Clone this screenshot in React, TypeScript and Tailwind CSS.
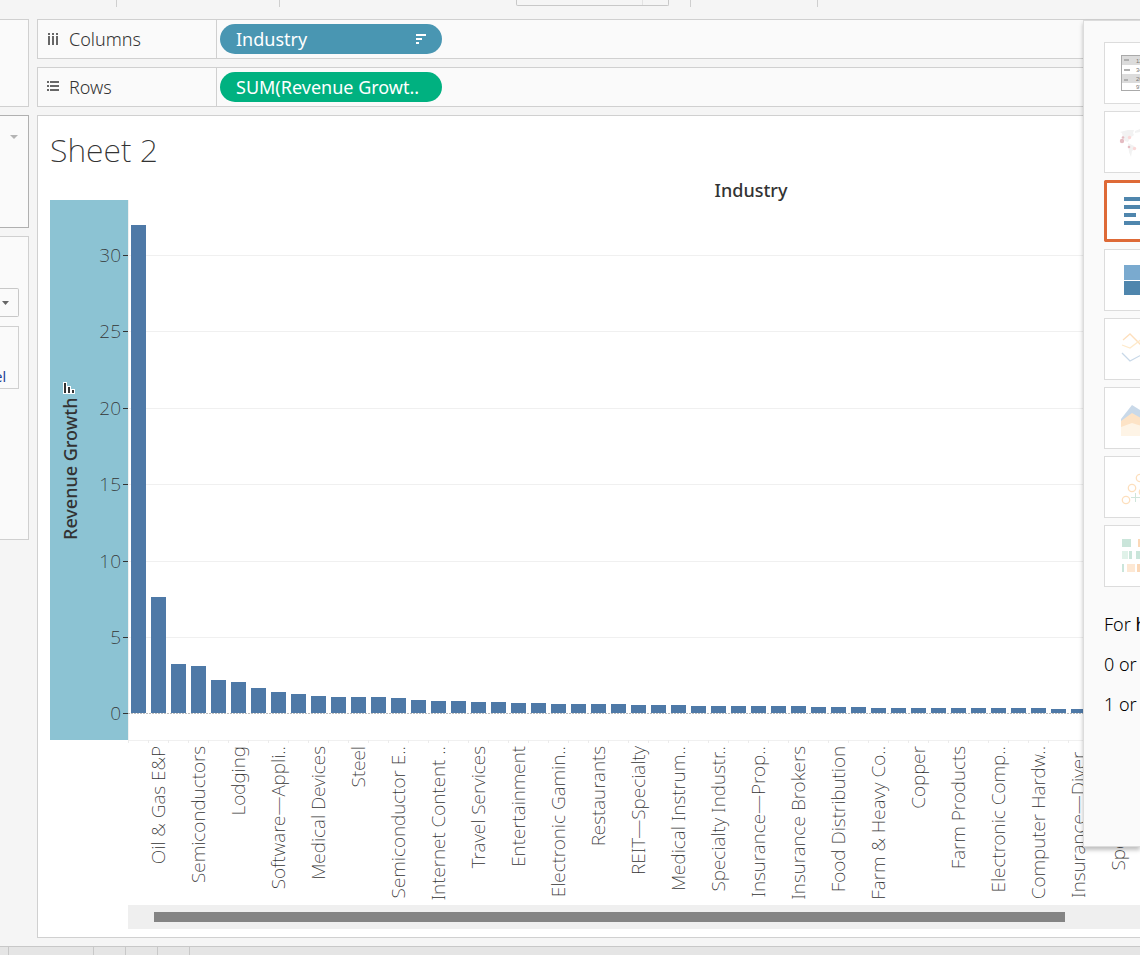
import type { ReactNode } from 'react';

const PLOT_HEIGHT = 540;
const BASELINE = 513;
const STEP = 20;
const UNIT = 15.27;

// === REVENUE GROWTH PER INDUSTRY (SORTED) ===
const growth: number[] = [
  31.96, 7.6, 3.2, 3.1, 2.15, 2.05, 1.65, 1.4, 1.25, 1.1, 1.05, 1.05, 1.05, 1.0,
  0.85, 0.8, 0.8, 0.7, 0.7, 0.65, 0.65, 0.6, 0.6, 0.6, 0.6, 0.52, 0.52, 0.52,
  0.45, 0.45, 0.45, 0.45, 0.45, 0.45, 0.4, 0.4, 0.4, 0.33, 0.33, 0.33, 0.33,
  0.33, 0.33, 0.33, 0.33, 0.33, 0.27, 0.27, 0.27, 0.27, 0.27, 0.27,
];

// every second industry gets a label
const industries: string[] = [
  'Oil & Gas E&P', 'Semiconductors', 'Lodging', 'Software—Appli..', 'Medical Devices',
  'Steel', 'Semiconductor E..', 'Internet Content ..', 'Travel Services',
  'Entertainment', 'Electronic Gamin..', 'Restaurants', 'REIT—Specialty',
  'Medical Instrum..', 'Specialty Industr..', 'Insurance—Prop..',
  'Insurance Brokers', 'Food Distribution', 'Farm & Heavy Co..', 'Copper',
  'Farm Products', 'Electronic Comp..', 'Computer Hardw..', 'Insurance—Diver..',
  'Specialty Retail',
];

const ticks = [
  { label: '30', y: 55 },
  { label: '25', y: 131 },
  { label: '20', y: 208 },
  { label: '15', y: 284 },
  { label: '10', y: 361 },
  { label: '5', y: 437 },
  { label: '0', y: 513 },
];

export default function App() {
  return (
    <div className="relative flex min-h-screen flex-col overflow-hidden bg-[#f5f5f5] font-['Noto_Sans',sans-serif] text-[#333]">
      <Toolbar />
      <div className="flex flex-1 gap-2">
        <SidePanel />
        <main className="flex min-w-0 flex-1 flex-col gap-2">
          <Shelf label="Columns" icon={<ColumnsIcon />}>
            <Pill name="Industry" color="bg-[#4996b2]" sorted />
          </Shelf>
          <Shelf label="Rows" icon={<RowsIcon />}>
            <Pill name="SUM(Revenue Growt.." color="bg-[#00b180]" />
          </Shelf>
          <Sheet />
        </main>
      </div>
      <StatusBar />
      <ShowMe />
    </div>
  );
}

const Toolbar = () => (
  <header className="flex h-[19px] shrink-0 items-start">
    <span className="h-[7px] w-[117px] border-r border-[#cfcfcf]" />
    <span className="h-[7px] w-[163px] border-r border-[#cfcfcf]" />
    <div className="ml-[236px] flex h-1.5 w-[153px] rounded-b-xs border border-t-0 border-[#c8c8c8]">
      <select aria-label="Fit" className="h-full min-w-0 flex-1 appearance-none bg-transparent" />
      <span className="w-[26px] border-l border-[#e3e3e3]" />
    </div>
    <span className="h-[7px] w-[22px] border-r border-[#cfcfcf]" />
    <span className="h-[7px] w-[127px] border-r border-[#cfcfcf]" />
  </header>
);

const SidePanel = () => (
  <aside className="flex w-[29px] shrink-0 flex-col gap-2">
    <section className="h-[88px] border border-l-0 border-[#d0d0d0] bg-[#fafafa]" />
    <section className="flex h-[113px] justify-end border border-l-0 border-[#b0b0b0] bg-[#fafafa] pt-[19px] pr-2.5">
      <svg width="8" height="4" viewBox="0 0 8 4" fill="#b4b4b4">
        <path d="M0 0h8L4 4z" />
      </svg>
    </section>
    <section className="h-[304px] border border-l-0 border-[#d0d0d0] bg-[#fafafa] pt-[51px] pr-[9px]">
      <div className="flex h-[29px] items-center justify-end rounded-r-xs border border-l-0 border-[#c8c8c8] pr-2">
        <select aria-label="Mark type" className="w-0 appearance-none" />
        <svg width="8" height="4" viewBox="0 0 8 4" fill="#666">
          <path d="M0 0h7L3.500 4z" />
        </svg>
      </div>
      <div className="mt-[9px] flex h-[63px] items-end justify-end overflow-hidden border border-l-0 border-[#d0d0d0] pr-3">
        <button className="pb-px text-sm text-[#1d3f94]">Label</button>
      </div>
    </section>
  </aside>
);

const Shelf = ({ label, icon, children }: { label: string; icon: ReactNode; children: ReactNode }) => (
  <section className="flex h-10 border border-r-0 border-[#d0d0d0] bg-[#fafafa]">
    <div className="flex w-[179px] shrink-0 items-center gap-2 border-r border-[#d0d0d0] pl-2 text-lg font-light">
      {icon}
      <h2 className="pl-px">{label}</h2>
    </div>
    <div className="flex items-center pl-[3px]">{children}</div>
  </section>
);

const Pill = ({ name, color, sorted }: { name: string; color: string; sorted?: boolean }) => (
  <button
    className={`flex h-[30px] w-[222px] items-center justify-between rounded-full px-4 text-lg whitespace-nowrap text-white ${color}`}
  >
    {name}
    {sorted && (
      <svg width="10" height="10" viewBox="0 0 10 10" fill="#fff">
        <path d="M0 0h10v2H0zM0 4h6v2H0zM0 8h3v2H0z" />
      </svg>
    )}
  </button>
);

const ColumnsIcon = () => (
  <svg width="14" height="12" viewBox="0 0 14 12" fill="#666" shapeRendering="crispEdges">
    <path d="M2 0h2v2H2zM6 0h2v2H6zM10 0h2v2h-2zM2 3h2v9H2zM6 3h2v9H6zM10 3h2v9h-2z" />
  </svg>
);

const RowsIcon = () => (
  <svg width="14" height="12" viewBox="0 0 14 12" fill="#666" shapeRendering="crispEdges">
    <path d="M1 0h2v2H1zM1 4h2v2H1zM1 8h2v2H1zM4 0h9v2H4zM4 4h9v2H4zM4 8h9v2H4z" />
  </svg>
);

const Sheet = () => (
  <section className="mb-2 flex flex-1 flex-col overflow-hidden border border-r-0 border-[#d0d0d0] bg-white pl-3">
    <h1 className="mt-3.5 text-[32px] leading-10 font-extralight">Sheet 2</h1>
    <div className="mt-2.5 flex">
      <ValueAxis />
      <div className="min-w-0 flex-1 overflow-hidden">
        <Plot />
      </div>
    </div>
    <div className="ml-[78px] flex h-6 items-center bg-[#efefef] pr-[75px] pl-[26px]">
      <div className="h-2.5 flex-1 bg-[#848484]" />
    </div>
  </section>
);

const ValueAxis = () => (
  <svg className="mt-5 shrink-0" width="78" height={PLOT_HEIGHT} viewBox={`0 0 78 ${PLOT_HEIGHT}`}>
    <rect width="78" height={PLOT_HEIGHT} fill="#8cc3d3" />
    {ticks.map(t => (
      <g key={t.label}>
        <rect x="73" y={t.y} width="5" height="1" fill="#333" />
        <text x="71" y={t.y + 7} textAnchor="end" className="fill-[#333] text-[19px] font-extralight">
          {t.label}
        </text>
      </g>
    ))}
    <text transform="translate(27 340) rotate(-90)" className="fill-[#333] text-lg font-medium">
      Revenue Growth
    </text>
    {/* sort indicator */}
    <path
      d="M14 183h2v10h-2zM18 187h2v6h-2zM22 190h2v3h-2z"
      fill="#333"
      stroke="#fff"
      strokeWidth="2"
      paintOrder="stroke"
    />
  </svg>
);

const Plot = () => (
  <div className="w-[1246px]">
    <h2 className="h-5 text-center text-lg leading-5 font-medium">Industry</h2>
    <svg width="1246" height="705" viewBox="0 0 1246 705">
      <g shapeRendering="crispEdges">
        {ticks.slice(0, -1).map(t => (
          <rect key={t.label} y={t.y} width="1246" height="1" fill="#f0f0f0" />
        ))}
        <rect width="1" height={PLOT_HEIGHT} fill="#f0f0f0" />
        <rect y={PLOT_HEIGHT} width="1246" height="1" fill="#f0f0f0" />
        <path d={`M0 ${BASELINE + 0.5}H1246`} stroke="#bdbdbd" strokeDasharray="2 1" />
        {growth.map((value, i) => {
          const h = Math.round(value * UNIT);
          return (
            <g key={i}>
              <rect x={i * STEP} y={PLOT_HEIGHT} width="1" height="3" fill="#ececec" />
              <rect x={i * STEP + 3} y={BASELINE - h} width="15" height={h} fill="#4e79a7" />
            </g>
          );
        })}
      </g>
      {industries.map((name, i) => (
        <text
          key={name}
          transform={`translate(${i * STEP * 2 + 37} 546) rotate(-90)`}
          textAnchor="end"
          className="fill-[#333] text-[19px] font-extralight"
        >
          {name}
        </text>
      ))}
    </svg>
  </div>
);

const StatusBar = () => (
  <footer className="flex h-[9px] shrink-0 border-t border-[#c8c8c8] bg-[#e5e5e5]">
    <span className="w-[9px] border-r border-[#c8c8c8]" />
    <span className="w-[85px] border-r border-[#c8c8c8]" />
    <span className="w-8 border-r border-[#c8c8c8]" />
    <span className="w-8 border-r border-[#c8c8c8]" />
    <span className="w-8 border-r border-[#c8c8c8]" />
  </footer>
);

// floating palette that sits over the right side of the sheet
const ShowMe = () => (
  <aside className="absolute top-5 right-0 h-[827px] w-[57px] overflow-hidden border border-r-0 border-[#dcdcdc] bg-[#fafafa] pt-[21px] pl-5 shadow-[0_3px_4px_rgba(0,0,0,0.25)]">
    <div className="flex w-[62px] flex-col gap-[7px]">
      <ChartCard label="text table">
        <rect x="16.500" y="12.500" width="42" height="35" fill="#fff" stroke="#aaa" />
        <path d="M17 13h42v9H17zM17 31h42v9H17z" fill="#dcdcdc" />
        <path d="M19 16h5v2h-5zM19 26h6v2h-6zM19 36h4v2h-4z" fill="#b0b0b0" />
        <g className="fill-[#777] font-['Liberation_Sans',sans-serif] text-[6px]">
          <text x="31" y="20">123</text>
          <text x="31" y="29">345</text>
          <text x="31" y="38">267</text>
          <text x="31" y="46">978</text>
        </g>
      </ChartCard>
      <ChartCard label="symbol map">
        <path d="M15 20l4-1 4-1 6 0-1 3 1 2-4 3-2 4-3-1-2-3-1-5zM23 31l6 3 1 3-3 2-1 6-2-5zM30 19l5-2v3l-5 1z" fill="#f2f2f2" />
        <g fill="#e4bcc2">
          <circle cx="17" cy="29" r="2.200" />
          <circle cx="18" cy="25.500" r="1.300" />
          <circle cx="24" cy="35" r="1.300" />
        </g>
        <circle cx="24.500" cy="25.500" r="1.700" fill="#fad8d8" />
        <circle cx="29.500" cy="36.500" r="1.700" fill="#fad8d8" />
      </ChartCard>
      <ChartCard label="horizontal bars" selected>
        <path d="M19 16h24v4H19zM19 24h20v4H19zM19 32h12v4H19zM19 40h18v4H19z" fill="#4f86ad" />
      </ChartCard>
      <ChartCard label="treemap">
        <path d="M19 15h26v15H19z" fill="#7aaacf" />
        <path d="M19 31h26v14H19z" fill="#4f86ad" />
      </ChartCard>
      <ChartCard label="lines">
        <g fill="none" strokeWidth="1.300">
          <path d="M18 21l7-6 13 13" stroke="#fddfbd" />
          <path d="M17 26l8 3 13-10" stroke="#feeacb" />
          <path d="M17 34l8 8 13-7" stroke="#c8d8e8" />
        </g>
      </ChartCard>
      <ChartCard label="area charts">
        <path d="M16 31l11-14 16 10v21H16z" fill="#c9d9e9" />
        <path d="M16 33l11-8 16 9v14H16z" fill="#fde3c6" />
        <path d="M16 39l11-4 16 5v8H16z" fill="#fef4e6" />
      </ChartCard>
      <ChartCard label="scatter plots">
        <g fill="none" stroke="#fddfbd" strokeWidth="1.300">
          <circle cx="21" cy="43" r="3.700" />
          <circle cx="27" cy="31" r="3.700" />
          <circle cx="35" cy="21" r="3.700" />
          <circle cx="38" cy="35" r="3.700" />
        </g>
        <path d="M26 40.500h9M30.500 36v9" stroke="#cfe5da" />
      </ChartCard>
      <ChartCard label="heat map">
        <path d="M17 13h9v8h-9zM24 25h3v8h-3zM31 25h6v8h-6zM17 38h2v8h-2z" fill="#cae5da" />
        <path d="M17 25h6v8h-6z" fill="#e0f2e9" />
        <path d="M33 13h6v8h-6zM32 38h3v8h-3z" fill="#fbd8b8" />
        <path d="M22 38h8v8h-8z" fill="#fde8d4" />
      </ChartCard>
    </div>
    <div className="mt-[25px] flex flex-col gap-4 text-lg leading-6 font-light whitespace-nowrap text-black">
      <p>For <b>horizontal bars</b> try</p>
      <p>0 or more Dimensions</p>
      <p>1 or more Measures</p>
    </div>
  </aside>
);

const ChartCard = ({ label, selected, children }: { label: string; selected?: boolean; children: ReactNode }) => (
  <button
    aria-label={label}
    className={`h-[62px] w-[62px] shrink-0 border bg-white ${selected ? 'rounded-xs border-[#de6a37] outline-3 -outline-offset-3 outline-[#de6a37]' : 'border-[#dcdcdc]'}`}
  >
    <svg className="h-[60px] w-[60px]" viewBox="0 0 60 60">
      {children}
    </svg>
  </button>
);
